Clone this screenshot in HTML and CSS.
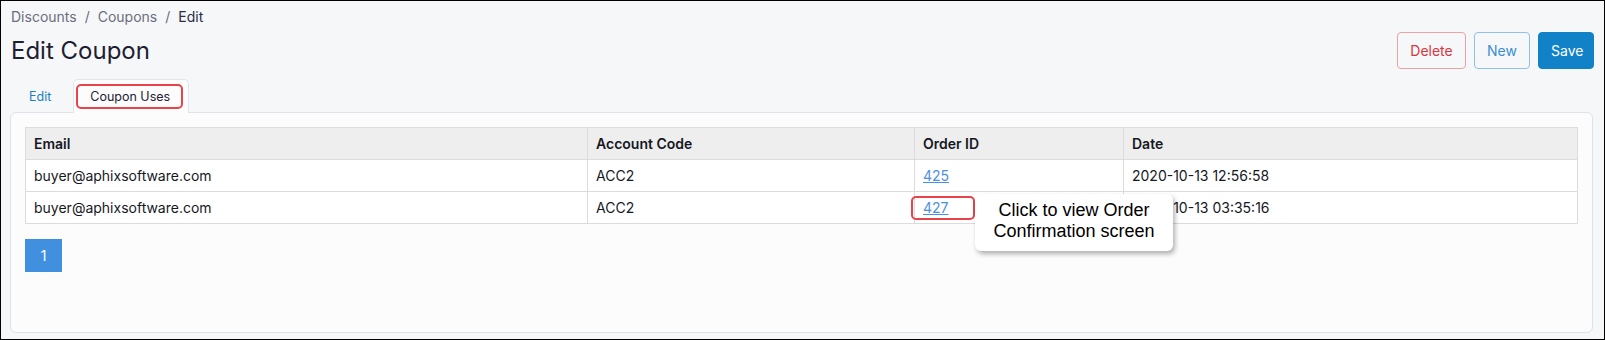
FILE: index.html
```html
<!DOCTYPE html>
<html lang="en">
<head>
    <meta charset="UTF-8">
    <meta name="viewport" content="width=device-width, initial-scale=1.0">
    <title>Edit Coupon</title>
    <link rel="stylesheet" href="styles.css">
</head>
<body>
    <div class="frame">
        <div class="breadcrumb">
            <a href="#">Discounts</a><span class="sep">/</span><a href="#">Coupons</a><span class="sep">/</span><span class="current">Edit</span>
        </div>
        <div class="head">
            <h1>Edit Coupon</h1>
            <div class="actions">
                <button class="btn btn-delete">Delete</button>
                <button class="btn btn-new">New</button>
                <button class="btn btn-save">Save</button>
            </div>
        </div>
        <div class="tabs">
            <a href="#" class="tab">Edit</a>
            <a href="#" class="tab active"><span class="mark">Coupon Uses</span></a>
        </div>
        <div class="card">
            <table class="uses">
                <thead>
                    <tr>
                        <th class="col-email">Email</th>
                        <th class="col-account">Account Code</th>
                        <th class="col-order">Order ID</th>
                        <th>Date</th>
                    </tr>
                </thead>
                <tbody>
                    <tr>
                        <td>buyer@aphixsoftware.com</td>
                        <td>ACC2</td>
                        <td><a href="#">425</a></td>
                        <td>2020-10-13 12:56:58</td>
                    </tr>
                    <tr>
                        <td>buyer@aphixsoftware.com</td>
                        <td>ACC2</td>
                        <td class="order-cell">
                            <a href="#">427</a>
                            <span class="mark-box"></span>
                            <div class="tip">Click to view Order<br>Confirmation screen</div>
                        </td>
                        <td>2020-10-13 03:35:16</td>
                    </tr>
                </tbody>
            </table>
            <div class="pager">
                <a href="#" class="page">1</a>
            </div>
        </div>
    </div>
</body>
</html>
```

FILE: styles.css
```css
* {
    box-sizing: border-box;
}
body {
    margin: 0;
    font-family: Inter, 'Noto Sans', sans-serif;
    font-size: 14px;
    color: #1f2233;
    background: #fff;
}
.frame {
    width: 1605px;
    height: 340px;
    border: 1px solid #000;
    background: #f6f7f9;
    display: flex;
    flex-direction: column;
}
.breadcrumb {
    padding: 6px 10px 0;
    line-height: 20px;
    font-size: 14px;
}
.breadcrumb a {
    color: #6b6e7e;
    text-decoration: none;
}
.breadcrumb .sep {
    color: #6b6e7e;
    margin: 0 8px;
}
.breadcrumb .current {
    color: #2a2e45;
}
.head {
    display: flex;
    justify-content: space-between;
    align-items: center;
    margin-top: 5px;
    padding: 0 10px 0 10px;
}
h1 {
    margin: 0;
    font-size: 24px;
    font-weight: 400;
    line-height: 37px;
    color: #1d2031;
}
.actions {
    display: flex;
    gap: 8px;
}
.btn {
    height: 37px;
    border-radius: 4px;
    font-family: Inter, sans-serif;
    font-size: 14px;
    padding: 0 12px;
    background: transparent;
    border: 1px solid;
    cursor: pointer;
}
.btn-delete {
    width: 69px;
    border-color: #eba2a4;
    color: #d9363e;
}
.btn-new {
    width: 56px;
    border-color: #8fc1e6;
    color: #3b8fd2;
}
.btn-save {
    width: 56px;
    background: #1282c8;
    border-color: #1282c8;
    color: #fff;
}
.tabs {
    display: flex;
    margin-top: 10px;
    padding-left: 9px;
    position: relative;
    z-index: 1;
}
.tab {
    display: block;
    height: 33px;
    line-height: 33px;
    padding: 0 21px 0 18px;
    font-size: 12.5px;
    color: #1b7fc4;
    text-decoration: none;
    border: 1px solid transparent;
    border-bottom: none;
}
.tab.active {
    color: #1f2233;
    background: #fcfcfc;
    border-color: #e1e4e8;
    border-radius: 5px 5px 0 0;
    padding: 4px 5px 3px 2px;
    margin-bottom: -1px;
    height: 34px;
}
.mark {
    display: block;
    height: 25px;
    line-height: 21px;
    padding: 0 11px 0 12px;
    border: 2px solid #e8434a;
    border-radius: 5px;
}
.card {
    flex: 1;
    margin: 0 11px 6px 9px;
    background: #fcfcfc;
    border: 1px solid #dfe2e6;
    border-radius: 6px;
    padding: 14px;
}
.uses {
    width: 100%;
    border-collapse: collapse;
    background: #fff;
    font-size: 14px;
}
.uses th, .uses td {
    border: 1px solid #dcdcdc;
    height: 32px;
    padding: 0 8px;
    text-align: left;
    color: #16181f;
}
.uses th {
    background: #eeeeee;
    font-weight: 600;
}
.col-email {
    width: 562px;
}
.col-account {
    width: 327px;
}
.col-order {
    width: 209px;
}
.uses td a {
    color: #4a90e2;
}
.order-cell {
    position: relative;
}
.mark-box {
    position: absolute;
    left: -4px;
    top: 4px;
    width: 64px;
    height: 24px;
    border: 2px solid #e8434a;
    border-radius: 5px;
}
.tip {
    position: absolute;
    left: 60px;
    top: 2px;
    width: 198px;
    height: 57px;
    padding-top: 6px;
    background: #fff;
    border-radius: 6px;
    box-shadow: 2px 3px 5px rgba(0, 0, 0, 0.3);
    font-family: 'Liberation Sans', Arial, sans-serif;
    font-size: 18px;
    line-height: 21px;
    text-align: center;
    color: #000;
    z-index: 2;
}
.pager {
    margin-top: 15px;
}
.page {
    display: inline-block;
    width: 37px;
    height: 33px;
    line-height: 33px;
    text-align: center;
    background: #4190e0;
    color: #fff;
    text-decoration: none;
    font-size: 14px;
}
```
